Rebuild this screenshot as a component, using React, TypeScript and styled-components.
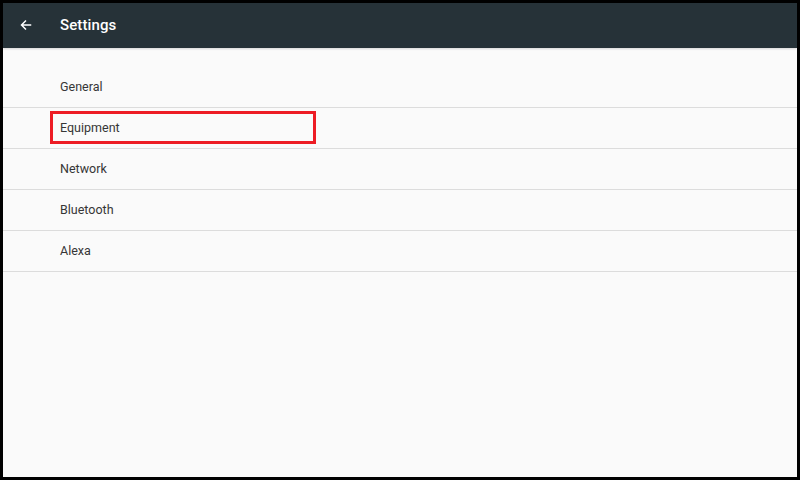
import React from 'react';
import styled, { createGlobalStyle } from 'styled-components';

const GlobalStyle = createGlobalStyle`
  html, body {
    margin: 0;
    padding: 0;
    background: #000;
  }
  body {
    font-family: Roboto, "Liberation Sans", sans-serif;
  }
`;

const Frame = styled.div`
  width: 800px;
  height: 480px;
  box-sizing: border-box;
  border: 3px solid #000;
  background: #fafafa;
  display: flex;
  flex-direction: column;
  overflow: hidden;
`;

const Toolbar = styled.header`
  height: 45px;
  flex-shrink: 0;
  background: #263238;
  display: flex;
  align-items: center;
  padding-bottom: 1px;
  box-sizing: border-box;
  box-shadow: 0 1px 2px rgba(0, 0, 0, 0.15);
`;

const BackButton = styled.button`
  width: 57px;
  height: 44px;
  padding: 0 0 0 17px;
  border: none;
  background: transparent;
  display: flex;
  align-items: center;
  color: #fff;
  cursor: pointer;
`;

const Title = styled.h1`
  margin: 0;
  font-size: 15px;
  font-weight: 500;
  color: #fff;
  letter-spacing: 0.1px;
`;

const List = styled.ul`
  list-style: none;
  margin: 0;
  padding: 19px 0 0;
`;

const Row = styled.li`
  height: 40px;
  padding-left: 57px;
  display: flex;
  align-items: center;
  border-bottom: 1px solid #dcdcdc;
  font-size: 12.5px;
  color: #363636;
`;

const Label = styled.span<{ $selected?: boolean }>`
  display: flex;
  align-items: center;
  height: 33px;
  width: 266px;
  box-sizing: border-box;
  margin: -1px 0 0 -10px;
  padding-left: 7px;
  border: 3px solid ${p => (p.$selected ? '#ed1c24' : 'transparent')};
`;

const items = ['General', 'Equipment', 'Network', 'Bluetooth', 'Alexa'];

export default function App() {
  return (
    <>
      <GlobalStyle />
      <Frame>
        <Toolbar>
          <BackButton aria-label="Back">
            <svg width="12" height="12" viewBox="0 0 16 16" fill="none">
              <path d="M15 8H2M8 2L2 8l6 6" stroke="#fff" strokeWidth="2" />
            </svg>
          </BackButton>
          <Title>Settings</Title>
        </Toolbar>
        <List>
          {items.map(item => (
            <Row key={item}>
              <Label $selected={item === 'Equipment'}>{item}</Label>
            </Row>
          ))}
        </List>
      </Frame>
    </>
  );
}
